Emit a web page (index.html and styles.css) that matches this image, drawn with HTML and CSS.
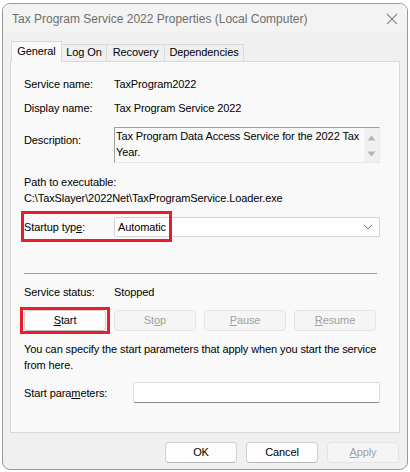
FILE: index.html
```html
<!DOCTYPE html>
<html>
<head>
<meta charset="utf-8">
<link rel="stylesheet" href="styles.css">
</head>
<body>
<div class="window">
  <div class="titlebar">
    <span class="title">Tax Program Service 2022 Properties (Local Computer)</span>
    <svg class="close" width="12" height="12" viewBox="0 0 12 12"><path d="M1 1 L11 11 M11 1 L1 11" stroke="#8a8a8a" stroke-width="1.1" fill="none"/></svg>
  </div>
  <div class="tabs">
    <div class="tab active t-general">General</div>
    <div class="tab t-logon">Log On</div>
    <div class="tab t-recovery">Recovery</div>
    <div class="tab t-deps">Dependencies</div>
  </div>
  <div class="panel">
    <div class="row r-name"><span class="label">Service name:</span><span class="value">TaxProgram2022</span></div>
    <div class="row r-display"><span class="label">Display name:</span><span class="value">Tax Program Service 2022</span></div>
    <div class="row r-desc">
      <span class="label desc-label">Description:</span>
      <div class="descbox">
        <div class="desctext">Tax Program Data Access Service for the 2022 Tax Year.</div>
        <div class="scroll">
          <svg width="9" height="6" viewBox="0 0 9 6"><path d="M4.5 0.5 L8.5 5.5 L0.5 5.5 Z" fill="#b4b4b4"/></svg>
          <svg width="9" height="6" viewBox="0 0 9 6"><path d="M0.5 0.5 L8.5 0.5 L4.5 5.5 Z" fill="#b4b4b4"/></svg>
        </div>
      </div>
    </div>
    <div class="path-label">Path to executable:</div>
    <div class="path">C:\TaxSlayer\2022Net\TaxProgramService.Loader.exe</div>
    <div class="row r-startup">
      <span class="label">Startup typ<u>e</u>:</span>
      <div class="select"><span>Automatic</span>
        <svg width="10" height="6" viewBox="0 0 10 6"><path d="M1 0.8 L5 4.8 L9 0.8" stroke="#5c5c5c" stroke-width="1" fill="none"/></svg>
      </div>
      <span class="annot annot-startup"></span>
    </div>
    <div class="separator"></div>
    <div class="row r-status"><span class="label">Service status:</span><span class="value">Stopped</span></div>
    <div class="btnrow">
      <div class="start-wrap"><button class="btn"><u>S</u>tart</button><span class="annot annot-start"></span></div>
      <button class="btn disabled">St<u>o</u>p</button>
      <button class="btn disabled"><u>P</u>ause</button>
      <button class="btn disabled"><u>R</u>esume</button>
    </div>
    <div class="info">You can specify the start parameters that apply when you start the service from here.</div>
    <div class="row r-params">
      <span class="label params-label">Start para<u>m</u>eters:</span>
      <div class="input"></div>
    </div>
  </div>
  <div class="footer">
    <button class="btn fbtn">OK</button>
    <button class="btn fbtn">Cancel</button>
    <button class="btn fbtn disabled"><u>A</u>pply</button>
  </div>
</div>
</body>
</html>
```

FILE: styles.css
```css
* { box-sizing: border-box; }
html, body { margin: 0; padding: 0; background: #ffffff; }
body {
  font-family: "Liberation Sans", Arial, sans-serif;
  font-size: 11px;
  letter-spacing: -0.1px;
  color: #000;
}
.window {
  margin: 3px 2px 0 2px;
  width: 406px;
  height: 467px;
  border: 1px solid #9a9a9a;
  border-radius: 8px;
  background: #f0f0f0;
  overflow: hidden;
  display: flex;
  flex-direction: column;
}
.titlebar {
  height: 29px;
  flex: none;
  display: flex;
  align-items: center;
  justify-content: space-between;
  padding: 0 9px 0 9px;
  background: #f3f3f3;
}
.title { color: #6e6e6e; font-size: 12px; letter-spacing: 0; line-height: 16px; }
.tabs {
  display: flex;
  align-items: flex-end;
  padding: 8px 0 0 8px;
  height: 28px;
  flex: none;
}
.tab {
  height: 17px;
  border: 1px solid #d9d9d9;
  border-bottom: none;
  background: #f0f0f0;
  text-align: center;
  line-height: 15px;
  margin-left: -1px;
}
.tab.active {
  height: 21px;
  margin-bottom: -1px;
  background: #f9f9f9;
  position: relative;
  z-index: 1;
  line-height: 18px;
  margin-left: 0;
}
.t-general { width: 51px; }
.t-logon { width: 46px; }
.t-recovery { width: 59px; }
.t-deps { width: 80px; }
.panel {
  margin: 0 7px;
  border: 1px solid #d9d9d9;
  background: #f9f9f9;
  padding: 14px 19px 0 13px;
  flex: none;
  height: 372px;
}
.row { display: flex; align-items: flex-start; line-height: 16px; }
.label { width: 90px; flex: none; }
.r-display { margin-top: 8px; }
.r-desc { margin-top: 11px; }
.desc-label { padding-top: 5px; }
.descbox {
  width: 266px;
  height: 36px;
  border: 1px solid #a0a0a0;
  border-right-color: #e8e8e8;
  border-bottom-color: #e8e8e8;
  background: #f9f9f9;
  display: flex;
}
.desctext { flex: 1; padding: 0 0 0 1px; line-height: 16px; }
.scroll {
  width: 16px;
  flex: none;
  background: #f0f0f0;
  border-left: 1px solid #fdfdfd;
  display: flex;
  flex-direction: column;
  align-items: center;
  justify-content: space-between;
  padding: 7px 0 5px 0;
}
.path-label { margin-top: 11px; line-height: 16px; }
.path { line-height: 16px; }
.r-startup { margin-top: 11px; position: relative; align-items: center; }
.select {
  width: 266px;
  height: 20px;
  background: #ffffff;
  border: 1px solid #d4d4d4;
  border-radius: 2px;
  display: flex;
  align-items: center;
  justify-content: space-between;
  padding: 0 6px 0 3px;
}
.annot {
  position: absolute;
  border: 3px solid #e81c2a;
  pointer-events: none;
}
.annot-startup { left: -3px; top: -6px; width: 151px; height: 31px; }
.separator { margin-top: 36px; height: 1px; background: #a0a0a0; width: 353px; }
.r-status { margin-top: 10px; }
.btnrow { display: flex; gap: 8px; margin-top: 10px; }
.start-wrap { position: relative; display: flex; }
.annot-start { left: -4px; top: -3px; right: -4px; bottom: -3px; }
.btn {
  font-family: inherit;
  font-size: 11px;
  letter-spacing: -0.1px;
  color: #000;
  width: 82px;
  height: 21px;
  padding: 0;
  background: #fdfdfd;
  border: 1px solid #d0d0d0;
  border-bottom-color: #b8b8b8;
  border-radius: 4px;
  line-height: 17px;
}
.btn.disabled {
  background: #f5f5f5;
  color: #a0a0a0;
  border-color: #e3e3e3;
}
.info { margin-top: 10px; line-height: 16px; }
.r-params { margin-top: 9px; align-items: center; }
.params-label { width: 109px; }
.input {
  width: 247px;
  height: 21px;
  background: #ffffff;
  border: 1px solid #dcdcdc;
  border-bottom-color: #8a8a8a;
  border-radius: 2px;
}
.footer {
  display: flex;
  justify-content: flex-end;
  gap: 9px;
  padding: 9px 8px 0 0;
}
.fbtn { width: 72px; height: 21px; }
```
